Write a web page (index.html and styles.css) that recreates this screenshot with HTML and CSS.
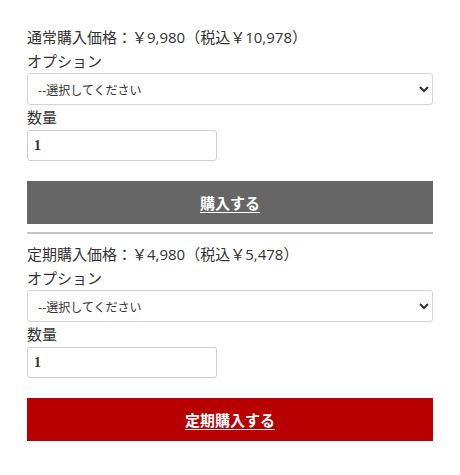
FILE: index.html
```html
<!DOCTYPE html>
<html lang="ja">
<head>
<meta charset="utf-8">
<link rel="stylesheet" href="styles.css">
</head>
<body>
<div class="wrap">
  <form class="buy">
    <p class="price">通常購入価格：￥9,980（税込￥10,978）</p>
    <p class="label">オプション</p>
    <select class="select"><option>--選択してください</option></select>
    <p class="label">数量</p>
    <input class="qty" type="text" value="1">
    <button type="button" class="btn btn-gray"><span>購入する</span></button>
  </form>
  <hr class="sep">
  <form class="buy second">
    <p class="price">定期購入価格：￥4,980（税込￥5,478）</p>
    <p class="label">オプション</p>
    <select class="select"><option>--選択してください</option></select>
    <p class="label">数量</p>
    <input class="qty" type="text" value="1">
    <button type="button" class="btn btn-red"><span>定期購入する</span></button>
  </form>
</div>
</body>
</html>
```
FILE: styles.css
```css
html, body {
  margin: 0;
  padding: 0;
  background: #fff;
}
body {
  font-family: "Open Sans", "Noto Sans CJK JP", sans-serif;
  color: #333;
  font-size: 15px;
  line-height: 24px;
}
.wrap {
  padding: 25px 27px 0 27px;
}
.buy {
  display: flex;
  flex-direction: column;
  margin: 0;
}
.price, .label {
  margin: 0;
  font-size: 15px;
  line-height: 24px;
}
.select {
  box-sizing: border-box;
  width: 100%;
  height: 32px;
  border: 1px solid #d4d4d4;
  border-radius: 3px;
  background: #fff;
  color: #333;
  font-family: "Noto Sans CJK JP", sans-serif;
  font-size: 12px;
  padding: 0 6px;
}
.qty {
  box-sizing: border-box;
  width: 190px;
  height: 31px;
  margin-top: 1px;
  border: 1px solid #cfcfcf;
  border-radius: 3px;
  padding: 0 6px;
  font-family: "Liberation Serif", serif;
  font-size: 14px;
  font-weight: bold;
  color: #333;
}
.btn {
  margin-top: 20px;
  height: 43px;
  width: 100%;
  border: none;
  color: #fff;
  font-family: "Noto Sans CJK JP", sans-serif;
  font-size: 15px;
  font-weight: bold;
  cursor: pointer;
}
.btn span {
  text-decoration: underline;
  text-underline-offset: 3px;
}
.btn-gray { background: #666666; }
.btn-red { background: #b80000; }
.sep {
  border: none;
  border-top: 2px solid #c4c4c4;
  margin: 8px 0 8px 0;
}
```
